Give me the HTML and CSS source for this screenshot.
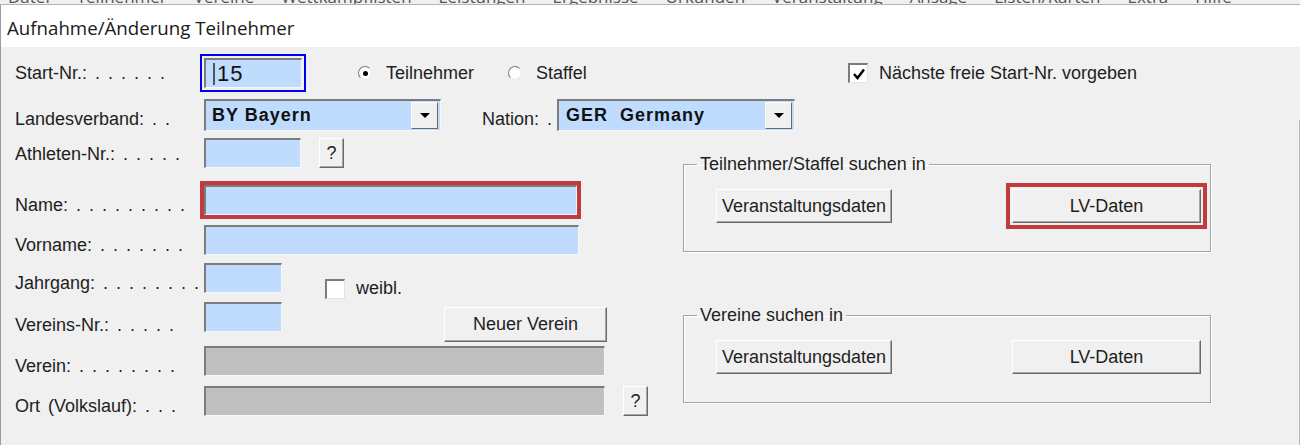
FILE: index.html
```html
<!DOCTYPE html>
<html lang="de">
<head>
    <meta charset="UTF-8">
    <title>Aufnahme/Änderung Teilnehmer</title>
    <link rel="stylesheet" href="styles.css">
</head>
<body>
    <div class="menubar">
        <span>Datei</span><span>Teilnehmer</span><span>Vereine</span><span>Wettkampflisten</span><span>Leistungen</span><span>Ergebnisse</span><span>Urkunden</span><span>Veranstaltung</span><span>Ansage</span><span>Listen/Karten</span><span>Extra</span><span>Hilfe</span>
    </div>
    <div class="window">
        <div class="titlebar">Aufnahme/Änderung Teilnehmer</div>
        <div class="dialog">
            <div class="row row-start">
                <span class="lbl">Start-Nr.: . . . . . .</span>
                <div class="focus-ring">
                    <div class="field start-nr"><span class="caret"></span>15</div>
                </div>
                <div class="opt opt-teil"><span class="radio checked"></span>Teilnehmer</div>
                <div class="opt opt-staffel"><span class="radio"></span>Staffel</div>
                <div class="opt"><span class="check"><svg width="14" height="14" viewBox="0 0 14 14"><polyline points="2,7 5.5,11 12,2.5" fill="none" stroke="#000" stroke-width="2.4"/></svg></span>Nächste freie Start-Nr. vorgeben</div>
            </div>
            <div class="row row-lv">
                <span class="lbl">Landesverband: . .</span>
                <div class="combo combo-lv"><span class="combo-value">BY Bayern</span><span class="combo-btn"></span></div>
                <span class="lbl lbl-nation">Nation: .</span>
                <div class="combo combo-nation"><span class="combo-value">GER&nbsp; Germany</span><span class="combo-btn"></span></div>
            </div>
            <div class="lower">
                <div class="form-col">
                    <div class="frow">
                        <span class="lbl lbl-hi">Athleten-Nr.: . . . . .</span>
                        <div class="field w-nr"></div>
                        <button class="btn btn-help">?</button>
                    </div>
                    <div class="frow">
                        <span class="lbl">Name: . . . . . . . . .</span>
                        <div class="field w-name marked"></div>
                    </div>
                    <div class="frow">
                        <span class="lbl">Vorname: . . . . . . .</span>
                        <div class="field w-vorname"></div>
                    </div>
                    <div class="frow">
                        <span class="lbl">Jahrgang: . . . . . . . .</span>
                        <div class="field w-short"></div>
                        <div class="opt opt-weibl"><span class="check"></span>weibl.</div>
                    </div>
                    <div class="frow">
                        <span class="lbl lbl-lo">Vereins-Nr.: . . . . .</span>
                        <div class="field w-short"></div>
                        <button class="btn btn-verein">Neuer Verein</button>
                    </div>
                    <div class="frow">
                        <span class="lbl">Verein: . . . . . . . .</span>
                        <div class="field w-long disabled"></div>
                    </div>
                    <div class="frow">
                        <span class="lbl">Ort (Volkslauf): . . .</span>
                        <div class="field w-long disabled"></div>
                        <button class="btn btn-help">?</button>
                    </div>
                </div>
                <div class="search-col">
                    <fieldset class="group">
                        <legend>Teilnehmer/Staffel suchen in</legend>
                        <button class="btn btn-search">Veranstaltungsdaten</button>
                        <button class="btn btn-lv marked">LV-Daten</button>
                    </fieldset>
                    <fieldset class="group group-vereine">
                        <legend>Vereine suchen in</legend>
                        <button class="btn btn-search">Veranstaltungsdaten</button>
                        <button class="btn btn-lv">LV-Daten</button>
                    </fieldset>
                </div>
                <div class="edge"></div>
            </div>
        </div>
    </div>
</body>
</html>
```

FILE: styles.css
```css
body {
    margin: 0;
    background-color: #f0f0f0;
    font-family: "Liberation Sans", Arial, sans-serif;
    font-size: 18px;
    color: #1e1e1e;
    overflow: hidden;
}
.menubar {
    height: 4px;
    overflow: hidden;
    display: flex;
    align-items: flex-end;
    gap: 27px;
    padding-left: 8px;
    border-bottom: 1px solid #b4b4b4;
    font-family: "Open Sans", sans-serif;
    font-size: 17px;
    line-height: 14px;
    color: #555;
}
.window {
    border-left: 1px solid #9c9c9c;
    height: 440px;
}
.titlebar {
    height: 42px;
    background: #fff;
    padding-left: 6px;
    font-family: "Open Sans", sans-serif;
    font-size: 18.7px;
    line-height: 46px;
    color: #1a1a1a;
}
.dialog {
    padding: 7px 0 0 14px;
}
.row {
    display: flex;
    align-items: flex-start;
}
.lbl {
    flex: none;
    width: 189px;
    white-space: pre;
    word-spacing: 3px;
    line-height: 18px;
    padding-top: 11px;
}
.lbl-hi {
    padding-top: 7px;
}
.lbl-lo {
    padding-top: 14px;
}
.row-start {
    align-items: center;
    height: 38px;
}
.row-start .lbl {
    width: 185px;
    padding-top: 0;
}
.focus-ring {
    border: 2px solid #0000f5;
    padding: 2px;
}
.field {
    box-sizing: border-box;
    height: 30px;
    background: #bfdcff;
    border-style: solid;
    border-width: 2px 1px 1px 2px;
    border-color: #7c7c7c #f7f7f7 #f7f7f7 #7c7c7c;
    flex: none;
}
.start-nr {
    width: 98px;
    display: flex;
    align-items: center;
    padding-left: 7px;
    font-size: 22px;
    letter-spacing: 1px;
    color: #111;
}
.caret {
    width: 0;
    height: 22px;
    border-left: 2px solid #555;
    margin-right: 2px;
}
.opt {
    display: flex;
    align-items: center;
    flex: none;
}
.opt-teil {
    margin-left: 52px;
    width: 150px;
}
.opt-staffel {
    width: 340px;
}
.radio {
    box-sizing: border-box;
    width: 14px;
    height: 14px;
    border-radius: 50%;
    background: #fff;
    border: 1px solid;
    border-color: #7a7a7a #e8e8e8 #e8e8e8 #7a7a7a;
    margin-right: 14px;
    display: flex;
    align-items: center;
    justify-content: center;
}
.radio.checked::after {
    content: "";
    width: 5px;
    height: 5px;
    border-radius: 50%;
    background: #000;
}
.check {
    box-sizing: border-box;
    width: 20px;
    height: 20px;
    background: #fff;
    border-style: solid;
    border-width: 2px 1px 1px 2px;
    border-color: #7c7c7c #e4e4e4 #e4e4e4 #7c7c7c;
    margin-right: 11px;
    display: flex;
    align-items: center;
    justify-content: center;
}
.row-lv {
    margin-top: 7px;
}
.combo {
    box-sizing: border-box;
    height: 32px;
    background: #bfdcff;
    border-style: solid;
    border-width: 2px 1px 1px 2px;
    border-color: #7c7c7c #f7f7f7 #f7f7f7 #7c7c7c;
    display: flex;
    align-items: center;
    justify-content: space-between;
    padding: 0 2px 0 6px;
}
.combo-value {
    font-weight: bold;
    letter-spacing: 1px;
    color: #111;
}
.combo-lv {
    width: 237px;
}
.combo-nation {
    width: 238px;
    padding-left: 7px;
}
.lbl-nation {
    width: 75px;
    margin-left: 41px;
}
.combo-btn {
    box-sizing: border-box;
    width: 27px;
    height: 27px;
    background: #f0f0f0;
    border-style: solid;
    border-width: 1px;
    border-color: #fff #6a6a6a #6a6a6a #fff;
    display: flex;
    align-items: center;
    justify-content: center;
}
.combo-btn::after {
    content: "";
    border-left: 5px solid transparent;
    border-right: 5px solid transparent;
    border-top: 5px solid #000;
}
.lower {
    display: flex;
    margin-top: 7px;
}
.form-col {
    width: 668px;
    display: grid;
    grid-template-rows: 47px 40px 38px 39px 44px 40px 31px;
}
.frow {
    display: flex;
    align-items: flex-start;
}
.w-nr {
    width: 97px;
}
.w-name {
    width: 373px;
}
.w-vorname {
    width: 375px;
}
.w-short {
    width: 78px;
}
.w-long {
    width: 401px;
}
.field.disabled {
    background: #c0c0c0;
}
.marked {
    outline: 4px solid #c03b3d;
}
.btn {
    box-sizing: border-box;
    font-family: "Liberation Sans", Arial, sans-serif;
    font-size: 18px;
    color: #1e1e1e;
    background: #f0f0f0;
    border-style: solid;
    border-width: 1px;
    border-color: #fff #6a6a6a #6a6a6a #fff;
    box-shadow: inset -1px -1px 0 #a6a6a6;
    padding: 0;
    flex: none;
}
.btn-help {
    width: 25px;
    height: 30px;
    margin-left: 18px;
}
.opt-weibl {
    margin: 15px 0 0 43px;
}
.btn-verein {
    width: 163px;
    height: 35px;
    margin: 5px 0 0 162px;
}
.search-col {
    padding-top: 17px;
}
.group {
    box-sizing: border-box;
    width: 528px;
    height: 97px;
    margin: 0;
    padding: 16px 0 0 32px;
    border: 1px solid #a3a3a3;
    box-shadow: inset 1px 1px 0 #fff, 1px 1px 0 #fff;
    display: flex;
    align-items: flex-start;
}
.group legend {
    margin-left: -19px;
    padding: 0 3px;
    line-height: 18px;
}
.group-vereine {
    margin-top: 54px;
}
.btn-search {
    width: 176px;
    height: 34px;
}
.btn-lv {
    width: 189px;
    height: 34px;
    margin-left: 120px;
}
.btn-lv.marked {
    outline-offset: 2px;
}
.edge {
    margin: -18px 0 0 auto;
    width: 1px;
    height: 330px;
    background: #b8b8b8;
}
```
